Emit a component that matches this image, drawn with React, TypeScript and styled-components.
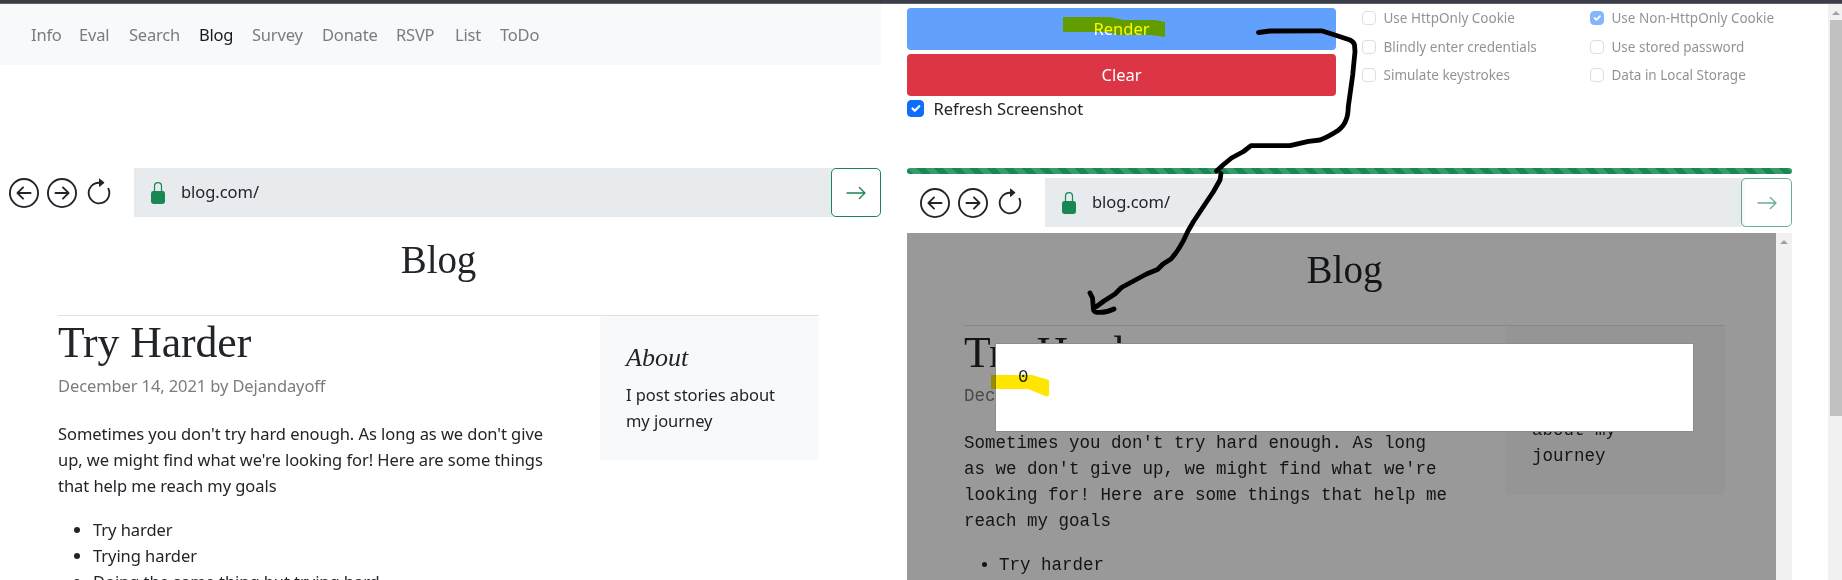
import React from "react";
import styled, { createGlobalStyle, css } from "styled-components";
import {
  BsArrowLeftCircle,
  BsArrowRightCircle,
  BsArrowClockwise,
  BsArrowRight,
} from "react-icons/bs";

const Global = createGlobalStyle`
  *, *::before, *::after { box-sizing: border-box; }
  html, body { margin: 0; padding: 0; height: 580px; overflow: hidden; background: #fff; }
  body { font-family: "Noto Sans", "Liberation Sans", sans-serif; font-size: 16.5px; line-height: 26px; color: #212529; }
  h1, h2, h4, p, ul { margin: 0; padding: 0; font-weight: 400; }
`;

const Page = styled.div`
  position: relative;
  display: flex;
  flex-direction: column;
  width: 1842px;
  height: 580px;
  overflow: hidden;
`;

const WindowEdge = styled.div`
  flex: none;
  height: 4px;
  background: #3b3e46;
  border-bottom: 1px solid #5d6066;
`;

const Columns = styled.div`
  flex: 1;
  display: flex;
  min-height: 0;
`;

const LeftPane = styled.section`
  width: 881px;
  display: flex;
  flex-direction: column;
`;

const Nav = styled.nav`
  flex: none;
  height: 61px;
  margin-bottom: 103px;
  padding: 1px 0 0 31px;
  display: flex;
  align-items: center;
  background: #f8f9fb;
`;

const NavLink = styled.a<{ $w: number; $active?: boolean }>`
  width: ${(p) => p.$w}px;
  white-space: nowrap;
  letter-spacing: -0.2px;
  color: ${(p) => (p.$active ? "#191a1a" : "#7b7c7d")};
`;

const Toolbar = styled.div<{ $indent: number }>`
  flex: none;
  display: flex;
  height: 49px;
  padding-left: ${(p) => p.$indent}px;
`;

const NavButtons = styled.div`
  width: 125px;
  display: flex;
  align-items: center;
  color: #212529;
  svg { display: block; flex: none; }
  svg + svg { margin-left: 8px; }
  svg:last-child { margin-left: 7px; }
`;

const Address = styled.div`
  flex: 1;
  display: flex;
  align-items: center;
  padding: 0 0 1px 17px;
  background: #e8ebee;
  color: #212529;
  letter-spacing: -0.05px;
  svg { margin: 1px 16px 0 0; }
`;

const GoButton = styled.button<{ $faded?: boolean }>`
  width: ${(p) => (p.$faded ? 51 : 50)}px;
  height: 49px;
  padding: 0;
  display: flex;
  align-items: center;
  justify-content: center;
  border: 1px solid #198754;
  border-radius: 5px;
  background: #fff;
  color: #198754;
  opacity: ${(p) => (p.$faded ? 0.65 : 1)};
`;

const GoSlot = styled.div`
  background: linear-gradient(to right, #e8ebee 4px, #fff 4px);
`;

const BlogHeader = styled.header`
  height: 99px;
  padding-top: 19px;
  text-align: center;
  border-bottom: 1px solid #dfe2e5;
  font: 39px/48px "Liberation Serif", serif;
`;

const Split = styled.div`
  display: flex;
  justify-content: space-between;
  align-items: flex-start;
`;

const Post = styled.article`
  width: 520px;
  white-space: nowrap;
`;

const PostTitle = styled.h2`
  font: 43.7px/52px "Liberation Serif", serif;
`;

const Meta = styled.p`
  margin-top: 5px;
  color: #7b7c7d;
  letter-spacing: -0.11px;
`;

const Line = styled.span`
  display: block;
`;

const Body = styled.p`
  margin-top: 22px;
`;

const List = styled.ul`
  margin-top: 18px;
  padding-left: 35px;
`;

const About = styled.aside`
  width: 219px;
  padding: 26px;
  border-radius: 4px;
  background: #f8f9fb;
  white-space: nowrap;
`;

const AboutTitle = styled.h4`
  font: italic 26px/31px "Liberation Serif", serif;
  letter-spacing: 0;
  margin-bottom: 9px;
`;

const Article = styled.div<{ $mono?: boolean }>`
  width: 761px;
  margin-left: ${(p) => (p.$mono ? 57 : 58)}px;
  letter-spacing: -0.055px;
  ${(p) =>
    p.$mono &&
    css`
      font-family: "Liberation Mono", monospace;
      font-size: 17.5px;
      letter-spacing: 0;
      ${BlogHeader} {
        height: 93px;
        padding-top: 13px;
      }
      ${Meta} {
        letter-spacing: 0;
      }
      ${Body} {
        margin-top: 21px;
      }
      ${AboutTitle} {
        margin-bottom: 8px;
      }
    `}
`;

const RightPane = styled.section`
  width: 885px;
  margin-left: 26px;
  display: flex;
  flex-direction: column;
`;

const Controls = styled.div`
  height: 164px;
  flex: none;
  display: flex;
`;

const Actions = styled.div`
  width: 429px;
  margin-right: 26px;
  padding-top: 4px;
`;

const ActionButton = styled.button<{ $bg: string }>`
  display: block;
  width: 100%;
  height: 42px;
  margin-bottom: 4px;
  padding: 0;
  border: 0;
  border-radius: 4px;
  background: ${(p) => p.$bg};
  color: #fff;
  font: inherit;
`;

const CheckRow = styled.label<{ $faded?: boolean }>`
  display: flex;
  align-items: center;
  gap: ${(p) => (p.$faded ? 7.5 : 9.5)}px;
  height: ${(p) => (p.$faded ? 28.5 : 17)}px;
  white-space: nowrap;
  ${(p) => p.$faded && css`opacity: 0.5; font-size: 13.5px;`}
`;

const Box = styled.span<{ $size: number; $on?: boolean }>`
  flex: none;
  width: ${(p) => p.$size}px;
  height: ${(p) => p.$size}px;
  border: 1px solid ${(p) => (p.$on ? "#0d6efd" : "#bfbfbf")};
  border-radius: 4px;
  background: ${(p) => (p.$on ? "#0d6efd" : "#fff")};
  svg { display: block; width: 100%; height: 100%; }
`;

const Options = styled.div`
  width: 430px;
  display: grid;
  grid-template-columns: 228px 202px;
  align-content: start;
`;

const Progress = styled.div`
  flex: none;
  height: 6px;
  margin-bottom: 4px;
  border-radius: 4px;
  background: #198754
    linear-gradient(45deg, rgba(255,255,255,.15) 25%, transparent 25%, transparent 50%, rgba(255,255,255,.15) 50%, rgba(255,255,255,.15) 75%, transparent 75%);
  background-size: 17.6px 17.6px;
`;

const Frame = styled.div`
  flex: 1;
  min-height: 0;
  margin-top: 6px;
  display: flex;
  overflow: hidden;
`;

const Shot = styled.div`
  position: relative;
  width: 869px;
  overflow: hidden;
`;

const Shade = styled.div`
  position: absolute;
  inset: 0;
  background: rgba(0, 0, 0, 0.4);
`;

const Dialog = styled.div`
  position: absolute;
  left: 88px;
  top: 110px;
  width: 699px;
  height: 89px;
  padding: 20px 22px;
  border: 1px solid #8c8c8c;
  background: #fff;
  font: 17.5px/26px "Liberation Mono", monospace;
`;

const Scroll = styled.div<{ $w: number; $pad?: number }>`
  flex: none;
  width: ${(p) => p.$w}px;
  margin-left: ${(p) => p.$pad ?? 0}px;
  background: #f1f1f1;
  display: flex;
  flex-direction: column;
  align-items: flex-end;
  svg { display: block; flex: none; }
`;

const Thumb = styled.div`
  width: 12px;
  height: 396px;
  background: #c1c1c1;
`;

const Ink = styled.svg`
  position: absolute;
  left: 0;
  top: 0;
  pointer-events: none;
`;

const Marker = styled(Ink)`
  mix-blend-mode: multiply;
`;

const Lock = () => (
  <svg width="14" height="22" viewBox="0 0 14 22">
    <path d="M3.5 10V4.1a3.5 3.5 0 0 1 7 0V10" fill="none" stroke="#198754" strokeWidth="1.2" />
    <rect x="0" y="9" width="14" height="13" rx="2.4" fill="#198754" />
  </svg>
);

const Tick = () => (
  <svg viewBox="0 0 20 20">
    <path d="M6 10l3 3 6-6" fill="none" stroke="#fff" strokeWidth="3" strokeLinecap="round" strokeLinejoin="round" />
  </svg>
);

const UpArrow = ({ width, height }: { width: number; height: number }) => (
  <svg width={width} height={height}>
    <path d="M4 11h8l-4-4z" fill="#a3a3a3" />
  </svg>
);

const BrowserBar = ({ indent, faded }: { indent: number; faded?: boolean }) => (
  <Toolbar $indent={indent}>
    <NavButtons>
      <BsArrowLeftCircle size={30} />
      <BsArrowRightCircle size={30} />
      <BsArrowClockwise size={30} />
    </NavButtons>
    <Address>
      <Lock />
      blog.com/
    </Address>
    <GoSlot>
      <GoButton $faded={faded}>
        <BsArrowRight size={22} />
      </GoButton>
    </GoSlot>
  </Toolbar>
);

const NAV: { label: string; w: number; active?: boolean }[] = [
  { label: "Info", w: 48 },
  { label: "Eval", w: 50 },
  { label: "Search", w: 70 },
  { label: "Blog", w: 53, active: true },
  { label: "Survey", w: 70 },
  { label: "Donate", w: 74 },
  { label: "RSVP", w: 59 },
  { label: "List", w: 45 },
  { label: "ToDo", w: 50 },
];

const OPTIONS: { label: string; on?: boolean }[] = [
  { label: "Use HttpOnly Cookie" },
  { label: "Use Non-HttpOnly Cookie", on: true },
  { label: "Blindly enter credentials" },
  { label: "Use stored password" },
  { label: "Simulate keystrokes" },
  { label: "Data in Local Storage" },
];

type BlogProps = { mono?: boolean; body: string[]; about: string[]; items: string[] };

const Blog = ({ mono, body, about, items }: BlogProps) => (
  <Article $mono={mono}>
    <BlogHeader>Blog</BlogHeader>
    <Split>
      <Post>
        <PostTitle>Try Harder</PostTitle>
        <Meta>December 14, 2021 by Dejandayoff</Meta>
        <Body>
          {body.map((t) => (
            <Line key={t}>{t}</Line>
          ))}
        </Body>
        <List>
          {items.map((t) => (
            <li key={t}>{t}</li>
          ))}
        </List>
      </Post>
      <About>
        <AboutTitle>About</AboutTitle>
        {about.map((t) => (
          <Line key={t}>{t}</Line>
        ))}
      </About>
    </Split>
  </Article>
);

export default function App() {
  return (
    <Page>
      <Global />
      <WindowEdge />
      <Columns>
        <LeftPane>
          <Nav>
            {NAV.map((n) => (
              <NavLink key={n.label} $w={n.w} $active={n.active}>
                {n.label}
              </NavLink>
            ))}
          </Nav>
          <BrowserBar indent={9} />
          <Blog
            body={[
              "Sometimes you don't try hard enough. As long as we don't give",
              "up, we might find what we're looking for! Here are some things",
              "that help me reach my goals",
            ]}
            about={["I post stories about", "my journey"]}
            items={["Try harder", "Trying harder", "Doing the same thing but trying hard"]}
          />
        </LeftPane>
        <RightPane>
          <Controls>
            <Actions>
              <ActionButton $bg="#62a0fe">Render</ActionButton>
              <ActionButton $bg="#dc3545">Clear</ActionButton>
              <CheckRow>
                <Box $size={17} $on>
                  <Tick />
                </Box>
                Refresh Screenshot
              </CheckRow>
            </Actions>
            <Options>
              {OPTIONS.map((o) => (
                <CheckRow key={o.label} $faded>
                  <Box $size={14} $on={o.on}>
                    {o.on && <Tick />}
                  </Box>
                  {o.label}
                </CheckRow>
              ))}
            </Options>
          </Controls>
          <Progress />
          <BrowserBar indent={13} faded />
          <Frame>
            <Shot>
              <Blog
                mono
                body={[
                  "Sometimes you don't try hard enough. As long",
                  "as we don't give up, we might find what we're",
                  "looking for! Here are some things that help me",
                  "reach my goals",
                ]}
                about={["I post stories", "about my", "journey"]}
                items={["Try harder"]}
              />
              <Shade />
              <Dialog>0</Dialog>
            </Shot>
            <Scroll $w={16}>
              <UpArrow width={16} height={17} />
            </Scroll>
          </Frame>
        </RightPane>
        <Scroll $w={14} $pad={36}>
          <UpArrow width={14} height={16} />
          <Thumb />
        </Scroll>
      </Columns>
      <Marker width="1842" height="580" viewBox="0 0 1842 580">
        <path d="M1063 17h47l14 3h31l10 2v15l-14-2h-33l-10-3h-45z" fill="#fffa00" />
        <path d="M991 375h41l17 5v15q-1 2-4 1l-17-7h-37z" fill="#ffe600" />
      </Marker>
      <Ink width="1842" height="580" viewBox="0 0 1842 580">
        <path
          d="M1258.5 32.5L1270 31L1321.5 30.8L1336.5 35.5L1350 40Q1354 42 1354.5 45L1355 51.5L1352.7 75L1348.3 106.7Q1348 116 1346 120Q1344 126 1338 130.5Q1328 137 1320 140L1308.5 141.3L1290 145.7H1251L1243.5 151.5L1231.5 158L1223 165L1216.5 171M1221 173.5L1220 180L1213.5 191.5L1193.5 221.5L1188 231L1183 241.5Q1178 251 1171 259L1163 264L1157.5 269.5L1146.5 274L1121.5 287.5L1115 294L1104 301L1096.5 306.5M1090 293L1092.5 298L1093.5 310Q1094 312 1097 312.3Q1106 313 1114 309"
          fill="none"
          stroke="#000"
          strokeWidth="4.8"
          strokeLinecap="round"
          strokeLinejoin="round"
        />
      </Ink>
    </Page>
  );
}
